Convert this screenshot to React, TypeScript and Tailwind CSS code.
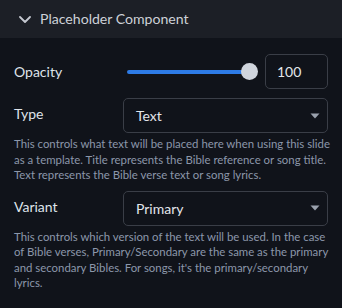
import type { FC } from 'react';

const Caret: FC = () => (
  <svg width="10" height="6" viewBox="0 0 10 6" className="shrink-0">
    <path d="M0.5 0.5h9L5 5.5z" fill="#9aa1ad" />
  </svg>
);

const Select: FC<{ value: string }> = ({ value }) => (
  <div className="flex h-[35px] w-[205px] items-center justify-between rounded-[5px] border border-[#3a3e47] bg-[#10131a] pl-[12px] pr-[7px] text-[14px] text-[#e3e6eb]">
    <span>{value}</span>
    <Caret />
  </div>
);

const Help: FC<{ lines: string[] }> = ({ lines }) => (
  <p className="text-[11.4px] leading-[15.5px] text-[#8c97aa]">
    {lines.map((l, i) => (
      <span key={i} className="block whitespace-nowrap">
        {l}
      </span>
    ))}
  </p>
);

export default function App() {
  return (
    <div
      className="h-[308px] w-[342px] overflow-hidden bg-[#10131a]"
      style={{ fontFamily: '"Segoe UI", Lato, "Noto Sans", sans-serif' }}
    >
      <div className="flex h-[38px] items-center gap-[9px] bg-[#1c1f26] pl-[19px]">
        <svg width="12" height="7" viewBox="0 0 12 7" fill="none">
          <path d="M1 1l5 5 5-5" stroke="#c4c8d0" strokeWidth="1.8" strokeLinecap="round" strokeLinejoin="round" />
        </svg>
        <span className="text-[14.1px] text-[#cdd1d8]">Placeholder Component</span>
      </div>

      <div className="flex flex-col px-[14px] pt-[16px]">
        <div className="flex h-[35px] items-center">
          <span className="w-[113px] text-[14px] text-[#dfe3ea]">Opacity</span>
          <div className="relative flex h-[18px] w-[131px] items-center">
            <div className="h-[4px] w-[123px] rounded-full bg-[#2d7be6]" />
            <div className="absolute right-0 top-0 h-[17px] w-[17px] rounded-full bg-[#d0d5dd]" />
          </div>
          <div className="ml-auto flex h-[35px] w-[63px] items-center rounded-[5px] border border-[#3a3e47] pl-[11px] text-[14px] text-[#e3e6eb]">
            100
          </div>
        </div>

        <div className="mt-[9px] flex items-center justify-between">
          <span className="-mt-[4px] text-[14px] text-[#dfe3ea]">Type</span>
          <Select value="Text" />
        </div>
        <div className="mt-[3px]">
          <Help
            lines={[
              'This controls what text will be placed here when using this slide',
              'as a template. Title represents the Bible reference or song title.',
              'Text represents the Bible verse text or song lyrics.',
            ]}
          />
        </div>

        <div className="mt-[8px] flex items-center justify-between">
          <span className="-mt-[4px] text-[14px] text-[#dfe3ea]">Variant</span>
          <Select value="Primary" />
        </div>
        <div className="mt-[3px]">
          <Help
            lines={[
              'This controls which version of the text will be used. In the case',
              'of Bible verses, Primary/Secondary are the same as the primary',
              "and secondary Bibles. For songs, it's the primary/secondary",
              'lyrics.',
            ]}
          />
        </div>
      </div>
    </div>
  );
}
